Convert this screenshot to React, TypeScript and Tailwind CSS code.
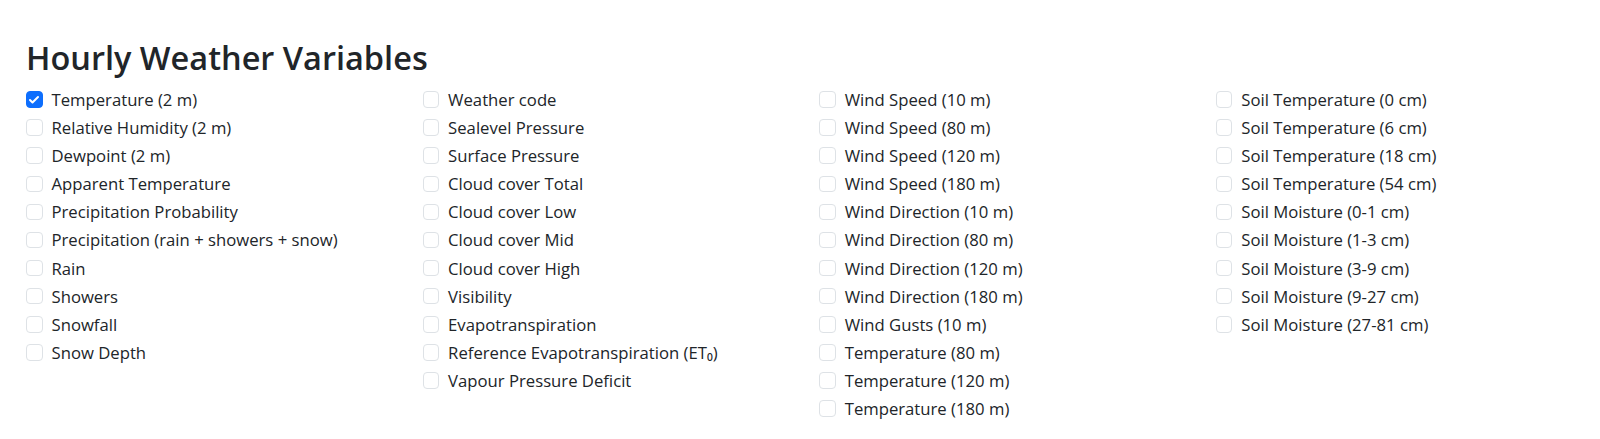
import { Check } from "lucide-react";

const columns: { label: string; checked?: boolean }[][] = [
  [
    { label: "Temperature (2 m)", checked: true },
    { label: "Relative Humidity (2 m)" },
    { label: "Dewpoint (2 m)" },
    { label: "Apparent Temperature" },
    { label: "Precipitation Probability" },
    { label: "Precipitation (rain + showers + snow)" },
    { label: "Rain" },
    { label: "Showers" },
    { label: "Snowfall" },
    { label: "Snow Depth" },
  ],
  [
    { label: "Weather code" },
    { label: "Sealevel Pressure" },
    { label: "Surface Pressure" },
    { label: "Cloud cover Total" },
    { label: "Cloud cover Low" },
    { label: "Cloud cover Mid" },
    { label: "Cloud cover High" },
    { label: "Visibility" },
    { label: "Evapotranspiration" },
    { label: "Reference Evapotranspiration (ET₀)" },
    { label: "Vapour Pressure Deficit" },
  ],
  [
    { label: "Wind Speed (10 m)" },
    { label: "Wind Speed (80 m)" },
    { label: "Wind Speed (120 m)" },
    { label: "Wind Speed (180 m)" },
    { label: "Wind Direction (10 m)" },
    { label: "Wind Direction (80 m)" },
    { label: "Wind Direction (120 m)" },
    { label: "Wind Direction (180 m)" },
    { label: "Wind Gusts (10 m)" },
    { label: "Temperature (80 m)" },
    { label: "Temperature (120 m)" },
    { label: "Temperature (180 m)" },
  ],
  [
    { label: "Soil Temperature (0 cm)" },
    { label: "Soil Temperature (6 cm)" },
    { label: "Soil Temperature (18 cm)" },
    { label: "Soil Temperature (54 cm)" },
    { label: "Soil Moisture (0-1 cm)" },
    { label: "Soil Moisture (1-3 cm)" },
    { label: "Soil Moisture (3-9 cm)" },
    { label: "Soil Moisture (9-27 cm)" },
    { label: "Soil Moisture (27-81 cm)" },
  ],
];

function CheckRow({ label, checked }: { label: string; checked?: boolean }) {
  return (
    <label className="flex h-[28.1px] items-center text-[16.7px] text-[#212529]">
      <span
        className={
          checked
            ? "flex size-[16.5px] shrink-0 items-center justify-center rounded-[4px] border border-[#0d6efd] bg-[#0d6efd]"
            : "size-[16.5px] shrink-0 rounded-[4px] border border-[#dee2e6] bg-white"
        }
      >
        {checked && <Check size={12} strokeWidth={4} className="text-white" aria-hidden />}
      </span>
      <span className="ml-[9px] whitespace-nowrap">{label}</span>
    </label>
  );
}

export default function App() {
  return (
    <div className="h-[439px] w-[1600px] bg-white pl-[26px] pt-[38px] font-['Open_Sans','Noto_Sans',sans-serif]">
      <h2 className="text-[32.5px] font-semibold leading-[1.2] text-[#212529]">Hourly Weather Variables</h2>
      <div className="mt-[8.5px] grid grid-cols-[repeat(4,396.6px)]">
        {columns.map((col, i) => (
          <div key={i} className="flex flex-col">
            {col.map((item) => (
              <CheckRow key={item.label} label={item.label} checked={item.checked} />
            ))}
          </div>
        ))}
      </div>
    </div>
  );
}
